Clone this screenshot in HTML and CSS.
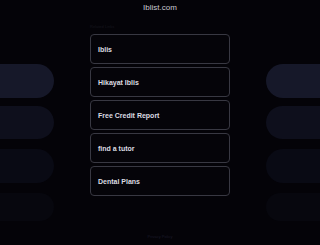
FILE: index.html
```html
<!DOCTYPE html>
<html lang="en">
  <head>
    <meta charset="UTF-8" />
    <meta name="viewport" content="width=device-width, initial-scale=1.0" />
    <title>iblist.com</title>
    <link rel="stylesheet" href="styles.css">
  </head>
  <body>
    <div class="domain">Iblist.com</div>

    <div class="main">
      <div class="pills pills-left">
        <div class="pill p1"></div>
        <div class="pill p2"></div>
        <div class="pill p3"></div>
        <div class="pill p4"></div>
      </div>

      <div class="links">
        <div class="links-title">Related Links</div>
        <a class="link" href="#">Iblis</a>
        <a class="link" href="#">Hikayat Iblis</a>
        <a class="link" href="#">Free Credit Report</a>
        <a class="link" href="#">find a tutor</a>
        <a class="link" href="#">Dental Plans</a>
        <div class="footer">Privacy Policy</div>
      </div>

      <div class="pills pills-right">
        <div class="pill p1"></div>
        <div class="pill p2"></div>
        <div class="pill p3"></div>
        <div class="pill p4"></div>
      </div>
    </div>
  </body>
</html>
```

FILE: styles.css
```css
body {
  margin: 0;
  padding: 0;
  height: 245px;
  overflow: hidden;
  background-color: #040308;
  font-family: "Liberation Sans", Arial, sans-serif;
  color: #d8d8de;
}

.domain {
  height: 16px;
  line-height: 16px;
  font-size: 8px;
  text-align: center;
  color: #c9c9d0;
}

.main {
  display: flex;
  justify-content: space-between;
}

.pills {
  width: 54px;
  padding-top: 48px;
  display: flex;
  flex-direction: column;
}

.pill {
  height: 34px;
  margin-bottom: 8px;
}

.pills-left .pill {
  border-radius: 0 17px 17px 0;
}

.pills-right .pill {
  border-radius: 17px 0 0 17px;
}

.p1 { background-color: #161829; }
.p2 { background-color: #0e0f1c; height: 33px; margin-bottom: 10px; }
.p3 { background-color: #090a14; margin-bottom: 10px; }
.p4 { background-color: #07070e; height: 28px; }

.links {
  width: 140px;
  display: flex;
  flex-direction: column;
  gap: 3px;
}

.links-title {
  height: 8px;
  margin-top: 7px;
  font-size: 4px;
  line-height: 8px;
  color: #16161e;
}

.link {
  height: 28px;
  display: flex;
  align-items: center;
  padding-left: 7px;
  border: 1px solid #383842;
  border-radius: 4px;
  background-color: #050409;
  font-size: 7px;
  font-weight: bold;
  color: #dcdce2;
  text-decoration: none;
}

.footer {
  margin-top: 35px;
  text-align: center;
  font-size: 4px;
  color: #1a1a28;
}
```
